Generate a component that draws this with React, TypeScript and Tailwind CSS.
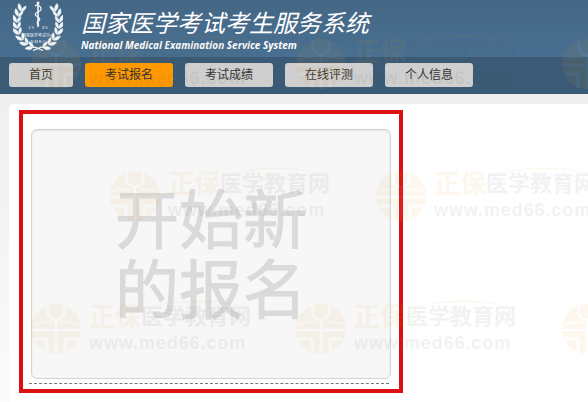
const navItems = [
  { label: '首页', active: false },
  { label: '考试报名', active: true },
  { label: '考试成绩', active: false },
  { label: '在线评测', active: false },
  { label: '个人信息', active: false },
]

// One entry per leaf pair on the left branch: position and direction
const leaves = [
  { x: 9, y: 7, r: 16 },
  { x: 6, y: 12, r: 14 },
  { x: 4, y: 18, r: 6 },
  { x: 4, y: 24, r: -4 },
  { x: 5, y: 30, r: -14 },
  { x: 8, y: 36, r: -28 },
  { x: 12, y: 41, r: -45 },
  { x: 17, y: 45, r: -65 },
]

const watermarks = [
  { id: 'a1', place: 'left-[31px] top-[38px]' },
  { id: 'a2', place: 'left-[296px] top-[38px]' },
  { id: 'a3', place: 'left-[562px] top-[38px]' },
  { id: 'b1', place: 'left-[110px] top-[170px]' },
  { id: 'b2', place: 'left-[376px] top-[170px]' },
  { id: 'c1', place: 'left-[31px] top-[303px]' },
  { id: 'c2', place: 'left-[296px] top-[303px]' },
  { id: 'c3', place: 'left-[562px] top-[303px]' },
]

function Branch() {
  return (
    <g stroke="#f1f6fa" strokeWidth="0.5">
      {leaves.map((leaf) => (
        <g key={leaf.y} transform={`translate(${leaf.x} ${leaf.y}) rotate(${leaf.r})`}>
          <path d="M0 3.500 C-4 2.500 -5 -1 -4.200 -3.500 C-1.500 -2 0 0 0 3.500Z" />
          <path d="M0.400 3.500 C3.600 2 4 -1 3.400 -3 C1 -1.600 0.200 0 0.400 3.500Z" />
        </g>
      ))}
    </g>
  )
}

function Emblem() {
  return (
    <svg viewBox="0 0 50 50" className="size-[50px] shrink-0 fill-[#f1f6fa]" aria-hidden="true">
      <Branch />
      <g transform="translate(50 0) scale(-1 1)">
        <Branch />
      </g>
      <path d="M15 47 Q21 45 25 47.500 Q29 45 35 47 M20 49.500 L25 47.500 L30 49.500" fill="none" stroke="#f1f6fa" strokeWidth="1.3" />
      {/* Staff and snake */}
      <circle cx="25" cy="2" r="1.500" />
      <path d="M25 2 V26" stroke="#f1f6fa" strokeWidth="1.600" />
      <path
        d="M22 5 Q24 3 27 5.500 Q30 9 25 11 Q20 13 24 15.500 Q29 18 25 20.500 Q23 22 26 24"
        fill="none"
        stroke="#f1f6fa"
        strokeWidth="1.300"
      />
      <g className="font-['Liberation_Sans','Noto_Sans_CJK_SC',sans-serif]" textAnchor="middle">
        <text x="18" y="28" fontSize="4">1 9</text>
        <text x="32" y="28" fontSize="4">8 5</text>
        <text x="25" y="36" fontSize="4">国家医学考试中心</text>
        <text x="25" y="42" fontSize="4">N M E C</text>
      </g>
    </svg>
  )
}

function Watermark({ place }: { place: string }) {
  return (
    <div className={`absolute flex items-center gap-2 opacity-[0.07] ${place}`}>
      <svg viewBox="0 0 50 50" className="size-[50px] shrink-0">
        <circle cx="25" cy="25" r="25" fill="#e8a020" />
        <g fill="none" stroke="#fff" strokeWidth="2.500">
          <path d="M25 15 V50 M0 26 H50" />
          <path d="M17 2 Q14 14 25 16 Q36 14 33 2" />
          <path d="M2 20 Q14 17 21 19 M48 20 Q36 17 29 19" strokeWidth="1.500" />
          <path d="M3 35 H14 Q16 35 16 38 V49 M47 35 H36 Q34 35 34 38 V49" strokeWidth="3" />
        </g>
      </svg>
      <div className="relative flex flex-col font-['Liberation_Sans','Noto_Sans_CJK_SC',sans-serif] whitespace-nowrap">
        <svg viewBox="0 0 110 10" className="absolute -top-1 left-14 h-[10px] w-[110px]">
          <path d="M0 9 Q52 -6 106 9 Q52 -3 0 9Z" fill="#e8a020" />
        </svg>
        <div className="flex items-center leading-7 font-bold">
          <span className="text-[26px] text-[#e8a020]">正保</span>
          <span className="text-[22px] text-[#555]">医学教育网</span>
        </div>
        <span className="text-lg leading-6 font-bold tracking-wider text-[#555]">www.med66.com</span>
      </div>
    </div>
  )
}

export default function App() {
  return (
    <div className="relative flex min-h-screen flex-col overflow-hidden bg-linear-to-b from-[#ebebeb] to-[#fbfbfb] font-['Liberation_Sans','Noto_Sans_CJK_SC',sans-serif]">
      <header className="flex h-[57px] items-start gap-[18px] bg-linear-to-b from-[#456785] to-[#486f91] px-[13px] pt-px text-white">
        <Emblem />
        <div className="flex flex-col pt-2 italic whitespace-nowrap">
          <h1 className="text-2xl leading-[30px]">国家医学考试考生服务系统</h1>
          <p className="font-['Open_Sans',sans-serif] text-[10px] leading-3 font-bold">
            National Medical Examination Service System
          </p>
        </div>
      </header>

      <nav className="flex gap-3 bg-[#3b5a75] px-[9px] pt-1.5 pb-[7px]">
        {navItems.map((item) => (
          <button
            key={item.label}
            type="button"
            className={`h-6 shrink-0 rounded-[3px] px-5 text-xs leading-6 text-[#333] ${item.active ? 'bg-[#ff9900]' : 'bg-[#cfcfcf]'}`}
          >
            {item.label}
          </button>
        ))}
      </nav>

      <main className="mt-2.5 ml-[9px] grow rounded-tl-[5px] bg-white pt-1.5 pl-2.5">
        <section className="w-fit border-4 border-[#dc1010] pt-[15px] pr-2 pb-[5px] pl-1.5">
          <button
            type="button"
            className="ml-0.5 flex h-[250px] w-[360px] items-center justify-center rounded-md border border-[#d3d3d3] bg-[#f7f7f7] pt-1 text-[64px] leading-[70px] text-[#dadada] shadow-[inset_0_1px_2px_#e4e4e4] [-webkit-text-stroke:1px_#dadada]"
          >
            <span className="w-48">开始新的报名</span>
          </button>
          <div className="mt-1 w-[360px] border-t border-dashed border-[#777]" />
        </section>
      </main>

      <div className="pointer-events-none absolute inset-0 overflow-hidden" aria-hidden="true">
        {watermarks.map((mark) => (
          <Watermark key={mark.id} place={mark.place} />
        ))}
      </div>
    </div>
  )
}
